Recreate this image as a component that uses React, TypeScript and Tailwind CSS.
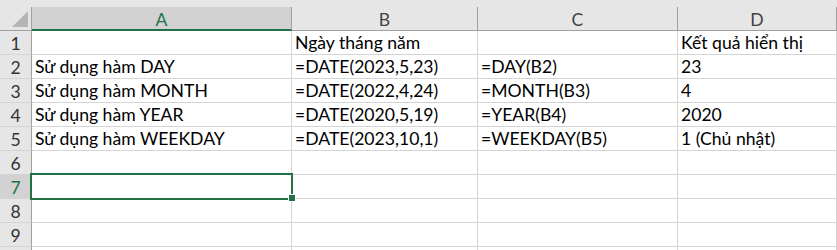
import React from "react";

const cols = ["A", "B", "C", "D"];

const rows: string[][] = [
  ["", "Ngày tháng năm", "", "Kết quả hiển thị"],
  ["Sử dụng hàm DAY", "=DATE(2023,5,23)", "=DAY(B2)", "23"],
  ["Sử dụng hàm MONTH", "=DATE(2022,4,24)", "=MONTH(B3)", "4"],
  ["Sử dụng hàm YEAR", "=DATE(2020,5,19)", "=YEAR(B4)", "2020"],
  ["Sử dụng hàm WEEKDAY", "=DATE(2023,10,1)", "=WEEKDAY(B5)", "1 (Chủ nhật)"],
  ["", "", "", ""],
  ["", "", "", ""],
  ["", "", "", ""],
  ["", "", "", ""],
  ["", "", "", ""],
];

const font = { fontFamily: "Lato, 'Noto Sans', sans-serif" };

export default function App() {
  return (
    <div className="w-[837px] h-[250px] overflow-hidden bg-white text-[17.6px] text-black" style={font}>
      {/* strip above the column headers */}
      <div className="h-[7px] bg-[#e6e6e6]" />

      <div className="relative grid grid-cols-[32px_260px_186px_200px_1fr] auto-rows-[24px]">
        {/* corner: select all */}
        <div className="relative bg-[#e6e6e6] border-r border-b border-[#a0a0a0]">
          <svg className="absolute right-[3px] bottom-[3px]" width="16" height="16" viewBox="0 0 16 16">
            <polygon points="16,0 16,16 0,16" fill="#b5b5b5" />
          </svg>
        </div>

        {/* column headers */}
        {cols.map((c) =>
          c === "A" ? (
            <div
              key={c}
              className="flex items-center justify-center bg-[#d2d2d2] border-r border-[#a0a0a0] border-b-2 border-b-[#217346] text-[#217346] leading-none pt-[3px]"
            >
              {c}
            </div>
          ) : (
            <div
              key={c}
              className="flex items-center justify-center bg-[#e6e6e6] border-r border-b border-[#a0a0a0] text-[#444] leading-none pt-[2px]"
            >
              {c}
            </div>
          )
        )}

        {/* body */}
        {rows.map((r, i) => (
          <React.Fragment key={i}>
            <div
              className={
                i === 6
                  ? "flex items-center justify-center bg-[#d2d2d2] border-r border-b border-r-[#a0a0a0] border-b-[#d4d4d4] text-[#217346] leading-none pt-[3px]"
                  : "flex items-center justify-center bg-[#e6e6e6] border-r border-b border-r-[#a0a0a0] border-b-[#d4d4d4] text-[#333] leading-none pt-[3px]"
              }
            >
              {i < 9 ? i + 1 : ""}
            </div>
            {r.map((v, j) => (
              <div
                key={j}
                className="flex items-end pl-[3px] pb-0 leading-[22px] border-r border-b border-[#d4d4d4] whitespace-nowrap"
              >
                {v}
              </div>
            ))}
          </React.Fragment>
        ))}

        {/* active cell A7 */}
        <div className="absolute left-[30px] top-[166px] w-[263px] h-[27px] border-2 border-[#217346] pointer-events-none" />
        <div className="absolute left-[288px] top-[187px] w-[8px] h-[8px] bg-white p-px">
          <div className="w-full h-full bg-[#217346]" />
        </div>
      </div>
    </div>
  );
}
